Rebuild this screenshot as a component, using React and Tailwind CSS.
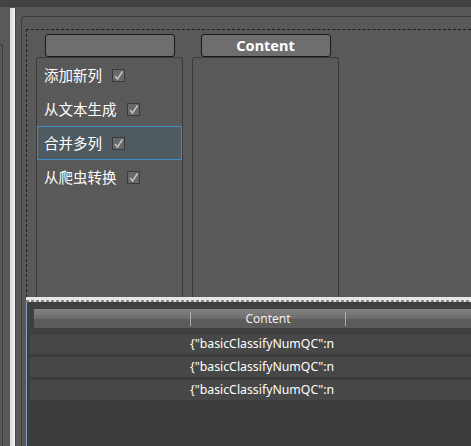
import React from 'react'

const items = [
  { label: '添加新列', selected: false },
  { label: '从文本生成', selected: false },
  { label: '合并多列', selected: true },
  { label: '从爬虫转换', selected: false },
]

const rows = [1, 2, 3]

function CheckBox() {
  return (
    <span className="inline-flex w-[13px] h-[13px] border border-[#3a3a3a] bg-[#686868] items-center justify-center">
      <svg width="11" height="11" viewBox="0 0 11 11">
        <path d="M2 6 L4.5 9 L9.5 1.5" fill="none" stroke="#c8c8c8" strokeWidth="1.4" />
      </svg>
    </span>
  )
}

export default function App() {
  return (
    <div
      className="w-[471px] h-[446px] overflow-hidden bg-[#595959] flex flex-col"
      style={{ fontFamily: '"Noto Sans", "Noto Sans CJK SC", sans-serif' }}
    >
      {/* top band */}
      <div className="h-[7px] bg-[#434343] shrink-0" />

      <div className="flex flex-1 min-h-0">
        {/* left sliver panel */}
        <div className="w-[10px] shrink-0 pt-[37px]">
          <div className="w-[3px] h-full border-r border-t border-[#3c3c3c] rounded-tr-[3px]" />
        </div>

        {/* white splitter bar */}
        <div className="w-[5px] shrink-0 mt-[1px] bg-[linear-gradient(to_right,#d6d6d6,#f4f4f4)]" />
        <div className="w-[1px] shrink-0 bg-[#474747]" />

        <div className="flex-1 flex flex-col min-w-0">
          <div className="h-[9px] shrink-0 bg-[#575757]" />

          <div className="flex-1 flex min-h-0 pl-[5px]">
            {/* main panel */}
            <div className="flex-1 flex flex-col border-l border-t border-[#3c3c3c] rounded-tl-[4px] pl-[4px] pt-[12px] min-w-0">
              {/* dashed design area */}
              <div className="flex-1 border-l border-t border-dashed border-[#1e1e1e] pl-[9px] pt-[4px] flex gap-[9px] min-h-0">
                <div className="w-[147px] flex flex-col items-center">
                  <div className="w-[130px] h-[23px] shrink-0 bg-[#6e6e6e] border border-[#1a1a1a] rounded-[3px]" />
                  <div className="flex-1 w-full border border-b-0 border-[#3a3a3a] rounded-t-[3px]">
                    {items.map((it) => (
                      <div
                        key={it.label}
                        className={
                          'h-[34px] flex items-center gap-[10px] px-[6px] border ' +
                          (it.selected
                            ? 'border-[#3a90c4] bg-[#4f5a61]'
                            : 'border-transparent')
                        }
                      >
                        <span className="text-[14.5px] text-white leading-none">{it.label}</span>
                        <CheckBox />
                      </div>
                    ))}
                  </div>
                </div>

                <div className="w-[147px] flex flex-col items-center">
                  <div className="w-[130px] h-[23px] shrink-0 bg-[#6e6e6e] border border-[#1a1a1a] rounded-[3px] flex items-center justify-center">
                    <span className="text-[14.5px] font-bold text-white leading-none">Content</span>
                  </div>
                  <div className="flex-1 w-full border border-b-0 border-[#3a3a3a] rounded-t-[3px]" />
                </div>
              </div>

              {/* horizontal splitter */}
              <div className="h-[3px] shrink-0 bg-[#e6e6e6]" />
              <div className="h-[2px] shrink-0 bg-[repeating-linear-gradient(to_right,#8a8a8a_0px,#8a8a8a_3px,#e6e6e6_3px,#e6e6e6_5px)]" />

              {/* data grid */}
              <div className="h-[144px] shrink-0 border-l border-[#87a3c4] bg-[#3d3d3d] flex flex-col">
                <div className="pt-[7px] pl-[7px] pb-[5px] bg-[#3f3f3f]">
                  <div className="h-[19px] flex items-center bg-[linear-gradient(to_bottom,#828282,#6c6c6c_50%,#5b5b5b_50%,#5b5b5b)]">
                    <div className="w-[156px] h-full shrink-0" />
                    <div className="w-[1px] h-[14px] bg-[#b0b0b0]" />
                    <div className="w-[154px] shrink-0 text-center text-[12px] text-[#f0f0f0] leading-none">Content</div>
                    <div className="w-[1px] h-[14px] bg-[#b0b0b0]" />
                  </div>
                </div>
                <div className="flex flex-col gap-[3px] pl-[3px] pt-[1px]">
                  {rows.map((r) => (
                    <div key={r} className="h-[20px] bg-[#474747] flex items-center">
                      <div className="w-[160px] shrink-0" />
                      <span className="text-[12.3px] text-white leading-none whitespace-nowrap">
                        {'{"basicClassifyNumQC":n'}
                      </span>
                    </div>
                  ))}
                </div>
              </div>
            </div>
          </div>
        </div>
      </div>
    </div>
  )
}
